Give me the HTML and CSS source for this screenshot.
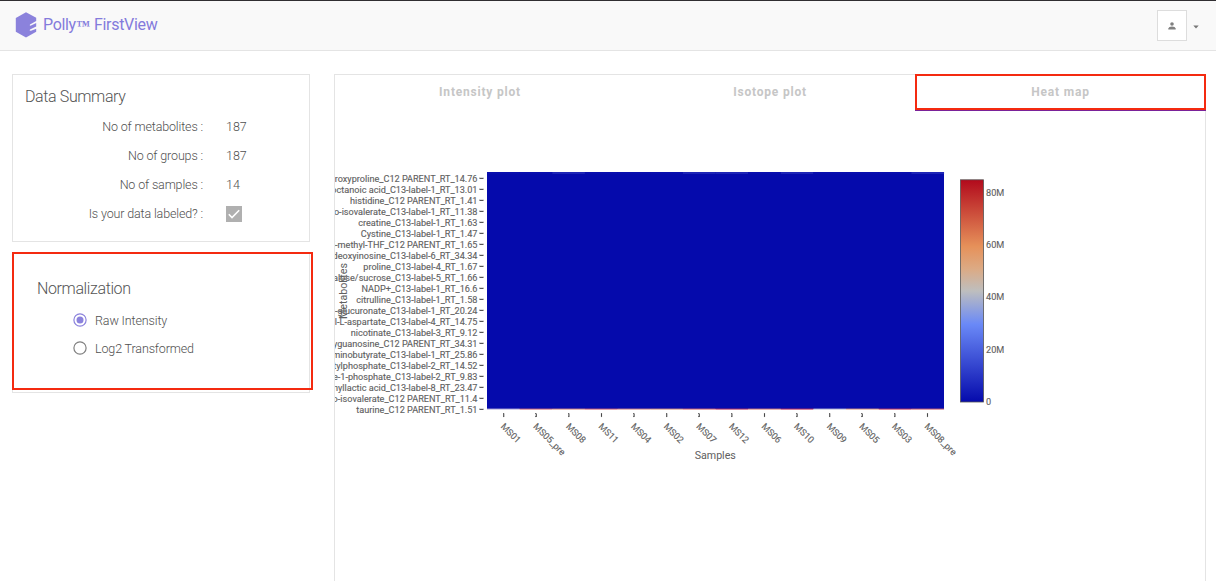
FILE: index.html
```html
<!DOCTYPE html>
<html lang="en">
<head>
<meta charset="utf-8">
<title>Polly FirstView</title>
<link rel="stylesheet" href="styles.css">
</head>
<body>
<header class="topbar">
  <div class="brand">
    <svg class="logo" width="22" height="26" viewBox="0 0 22 26"><path d="M11 .3 21.2 5.7V9L15 12.5Q14 13.8 16 13.6L21.2 11V14.5L15 17.5Q13.8 19 16 18.8L21.2 16.7V19.8L11 25.5.8 19.8V6Z" fill="#8b82dc"/></svg>
    <span class="brand-name">Polly<span class="tm">™</span></span><span class="product">FirstView</span>
  </div>
  <div class="account">
    <button class="avatar" aria-label="Account"><svg width="8" height="8" viewBox="0 0 8 8" fill="#808080"><circle cx="4" cy="2" r="1.8"/><path d="M.3 7.5V6.4Q.7 4.7 4 4.6 7.3 4.7 7.7 6.4V7.5Z"/></svg></button>
    <svg class="caret" width="6" height="4" viewBox="0 0 6 4"><path d="M.3.5H5.7L3 3.4Z" fill="#777"/></svg>
  </div>
</header>
<main class="layout">
  <aside class="sidebar">
    <section class="card summary">
      <h2>Data Summary</h2>
      <dl>
        <dt>No of metabolites :</dt><dd>187</dd>
        <dt>No of groups :</dt><dd>187</dd>
        <dt>No of samples :</dt><dd>14</dd>
        <dt>Is your data labeled? :</dt><dd><svg class="check" width="16" height="16" viewBox="0 0 16 16"><path d="M0 0H16V16H0Z" fill="#b0b0b0"/><path d="M2.8 8.3 6 11.6 13.2 4.3" fill="none" stroke="#fff" stroke-width="1.6"/></svg></dd>
      </dl>
    </section>
    <section class="card normalization">
      <h2>Normalization</h2>
      <div class="option"><svg width="14" height="14" viewBox="0 0 14 14"><circle cx="7" cy="7" r="6.1" fill="none" stroke="#8b82dc" stroke-width="1.2"/><circle cx="7" cy="7" r="3.5" fill="#8b82dc"/></svg><span>Raw Intensity</span></div>
      <div class="option"><svg width="14" height="14" viewBox="0 0 14 14"><circle cx="7" cy="7" r="6.1" fill="none" stroke="#808080" stroke-width="1.2"/></svg><span>Log2 Transformed</span></div>
      <div class="highlight"></div>
    </section>
  </aside>
  <section class="panel">
    <nav class="tabs"><span class="tab">Intensity plot</span><span class="tab">Isotope plot</span><span class="tab active">Heat map</span></nav>
    <svg class="chart" width="870" height="469" viewBox="335 111 870 469">
      <defs>
        <linearGradient id="scale" x1="0" y1="1" x2="0" y2="0">
          <stop offset="0" stop-color="#050aac"/><stop offset=".35" stop-color="#6a89f7"/><stop offset=".5" stop-color="#bebebe"/><stop offset=".6" stop-color="#dcaa84"/><stop offset=".7" stop-color="#e6915a"/><stop offset="1" stop-color="#b20a1c"/>
        </linearGradient>
      </defs>
      <rect x="487" y="172" width="457" height="237" fill="#050aac"/>
      <g id="cells"></g>
      <g id="ylabels" class="tick" text-anchor="end"></g>
      <g id="xlabels" class="tick"></g>
      <text class="axis" transform="translate(346.5 291) rotate(-90)" text-anchor="middle" textLength="56">Metabolites</text>
      <text class="axis" x="715.3" y="459" text-anchor="middle" textLength="41">Samples</text>
      <rect x="960.5" y="179.8" width="23" height="222.2" fill="url(#scale)" stroke="#555" stroke-width=".8"/>
      <g class="tick"><text x="986" y="196">80M</text><text x="986" y="248.3">60M</text><text x="986" y="300.4">40M</text><text x="986" y="352.9">20M</text><text x="986" y="405.2">0</text></g>
    </svg>
  </section>
</main>
<script src="chart.js"></script>
</body>
</html>
```
FILE: styles.css
```css
* { box-sizing: border-box; }
body { margin: 0; height: 581px; overflow: hidden; background: #fff; color: #757575; font-family: Roboto, "Liberation Sans", sans-serif; }
.topbar { height: 51px; border-top: 1px solid #302e31; border-bottom: 1px solid #e4e4e4; background: #f9f9f9; display: flex; justify-content: space-between; padding: 0 17px 0 15px; }
.brand { display: flex; align-items: flex-start; color: #847bdc; font-size: 16px; line-height: 20px; padding-top: 11px; letter-spacing: -.32px; }
.brand-name { margin: 3px 6px 0 6px; width: 45px; white-space: nowrap; }
.product { margin-top: 3px; }
.tm { font-family: "Liberation Serif", serif; font-size: 14px; font-weight: 700; line-height: 1; }
.account { display: flex; align-items: center; gap: 6px; }
.avatar { width: 30px; height: 31px; padding: 0; border: 1px solid #ddd; background: #fff; display: flex; align-items: center; justify-content: center; }
.caret { margin-top: 3px; margin-right: 0; }
.layout { display: grid; grid-template-columns: 298px 872px; gap: 24px; padding: 23px 0 0 12px; }
.card { border: 1px solid #e4e4e4; width: 298px; }
.card h2 { margin: 0; font-size: 16px; font-weight: 300; line-height: 20px; letter-spacing: -.38px; color: #555; }
.summary { height: 168px; padding: 12px; }
.summary dl { display: grid; grid-template-columns: 178px 60px; column-gap: 23px; grid-auto-rows: 28.9px; margin: 5px 0 0; font-size: 12.5px; line-height: 29px; font-weight: 300; color: #505050; }
.summary dt { text-align: right; letter-spacing: -.14px; }
.summary dd { margin: 0; }
.check { display: block; margin-top: 7px; }
.normalization { position: relative; height: 140px; margin-top: 11px; padding: 25px 24px; font-size: 12.5px; font-weight: 300; color: #505050; letter-spacing: -.13px; }
.highlight { position: absolute; left: -1px; top: -2px; width: 301px; height: 138px; border: 2px solid #f42a10; }
.option { display: flex; align-items: center; gap: 8px; height: 28px; margin-left: 36px; }
.normalization h2 + .option { margin-top: 7px; }
.panel { height: 507px; border: 1px solid #e4e4e4; border-bottom: 0; }
.tabs { display: grid; grid-template-columns: 290px 290px 290px; height: 36px; }
.tab { text-align: center; font-size: 12px; font-weight: 700; letter-spacing: .8px; line-height: 34px; color: #c6c6c6; }
.active { margin-top: -1px; height: 36px; margin-right: -1px; border: 2px solid #f42a10; box-shadow: 0 1px #7a2299; line-height: 32px; }
.chart { display: block; }
.tick { font-size: 9.15px; fill: #606060; stroke: #606060; stroke-width: .12px; }
.axis { font-size: 10.7px; fill: #606060; }
```
FILE: chart.js
```js
const NS = "http://www.w3.org/2000/svg";
const add = (parent, name, attrs, text) => {
  const node = document.createElementNS(NS, name);
  for (const key in attrs) node.setAttribute(key, attrs[key]);
  if (text) node.textContent = text;
  document.getElementById(parent).appendChild(node);
};
const metabolites = ["4-hydroxyproline_C12 PARENT_RT_14.76", "octanoic acid_C13-label-1_RT_13.01", "histidine_C12 PARENT_RT_1.41", "2-keto-isovalerate_C13-label-1_RT_11.38", "creatine_C13-label-1_RT_1.63", "Cystine_C13-label-1_RT_1.47", "5-methyl-THF_C12 PARENT_RT_1.65", "deoxyinosine_C13-label-6_RT_34.34", "proline_C13-label-4_RT_1.67", "trehalose/sucrose_C13-label-5_RT_1.66", "NADP+_C13-label-1_RT_16.6", "citrulline_C13-label-1_RT_1.58", "D-glucuronate_C13-label-1_RT_20.24", "N-acetyl-L-aspartate_C13-label-4_RT_14.75", "nicotinate_C13-label-3_RT_9.12", "deoxyguanosine_C12 PARENT_RT_34.31", "aminobutyrate_C13-label-1_RT_25.86", "acetylphosphate_C13-label-2_RT_14.52", "glucose-1-phosphate_C13-label-2_RT_9.83", "phenyllactic acid_C13-label-8_RT_23.47", "2-keto-isovalerate_C12 PARENT_RT_11.4", "taurine_C12 PARENT_RT_1.51"];
metabolites.forEach((label, i) => {
  const y = 178.4 + i * 11;
  add("ylabels", "text", { x: 477.5, y: y + 3.3 }, label);
  add("ylabels", "rect", { x: 479.5, y: y - .5, width: 4, height: 1, fill: "#444" });
});
const samples = ["MS01", "MS05_pre", "MS08", "MS11", "MS04", "MS02", "MS07", "MS12", "MS06", "MS10", "MS09", "MS05", "MS03", "MS08_pre"];
const bottom = ["#b8aed8", "#cf6b78", "#d98d82", "#cf6272", "#d58987", "#d8957f", "#d66d70", "#ba3560", "#d88078", "#bd315c", "#bebed4", "#df9c83", "#c03b60", "#cf626f"];
samples.forEach((label, i) => {
  const left = 487 + i * 457 / 14, x = 503.6 + i * 32.6;
  add("cells", "rect", { x: left, y: 172, width: 32.7, height: 2, fill: [2, 6, 7, 9, 13].includes(i) ? "#1d24b6" : "#090eae" });
  add("cells", "rect", { x: left, y: 408.6, width: 32.7, height: 1, fill: bottom[i] });
  add("xlabels", "rect", { x: x - .4, y: 413.5, width: 1, height: 3.5, fill: "#444" });
  add("xlabels", "text", { transform: `translate(${x - 3.4} 427) rotate(45)` }, label);
});
```
